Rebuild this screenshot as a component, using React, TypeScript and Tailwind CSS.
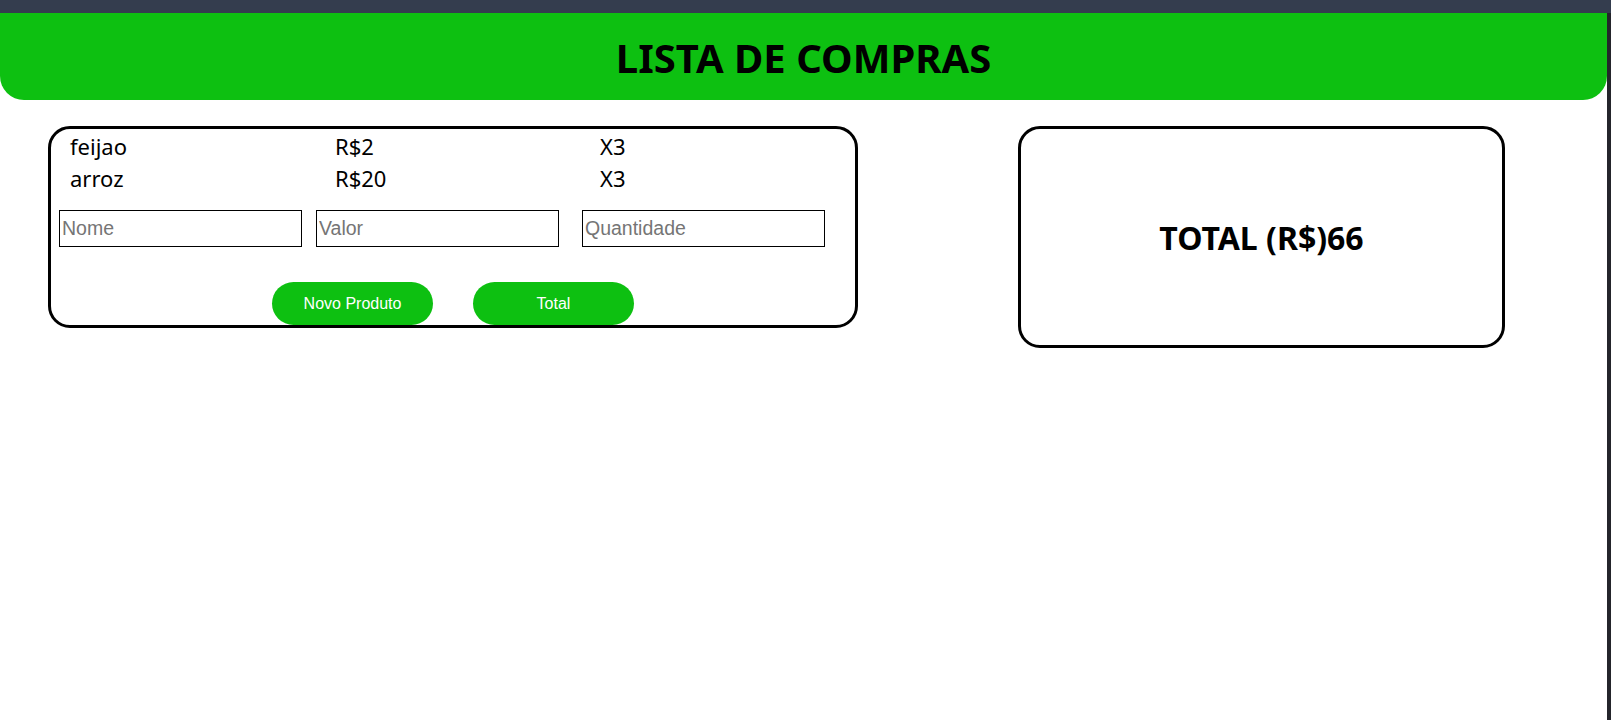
import React from "react"

type Item = { nome: string; valor: number; quantidade: number }

const itens: Item[] = [
  { nome: "feijao", valor: 2, quantidade: 3 },
  { nome: "arroz", valor: 20, quantidade: 3 },
]

const App: React.FC = () => {
  const total = itens.reduce((acc, i) => acc + i.valor * i.quantidade, 0)

  return (
    <div className="min-h-screen flex flex-col bg-white text-black">
      <div className="h-[13px] bg-[#343d4e]" />
      <div className="flex flex-1">
        <div className="flex-1 flex flex-col">
          <header className="h-[87px] bg-[#0dc011] rounded-b-[24px] flex items-center justify-center pt-[2px]">
            <h1 className="font-['Noto_Sans',sans-serif] text-[40px] leading-none font-bold">
              LISTA DE COMPRAS
            </h1>
          </header>

          <main className="flex items-start pt-[26px]">
            <section className="ml-[48px] w-[810px] h-[202px] border-[3px] border-black rounded-[22px] flex flex-col">
              <ul className="pl-[19px] pt-[1px] font-['Noto_Sans',sans-serif] text-[22px] leading-[32px]">
                {itens.map((item) => (
                  <li key={item.nome} className="grid grid-cols-[265px_265px_265px]">
                    <span>{item.nome}</span>
                    <span>R${item.valor}</span>
                    <span>X{item.quantidade}</span>
                  </li>
                ))}
              </ul>

              <div className="flex mt-[16px] ml-[8px] font-['Liberation_Sans',Arial,sans-serif] text-[19.5px]">
                <input
                  placeholder="Nome"
                  className="w-[243px] h-[37px] border border-black px-[2px] outline-none placeholder:text-[#757575]"
                />
                <input
                  placeholder="Valor"
                  className="ml-[14px] w-[243px] h-[37px] border border-black px-[2px] outline-none placeholder:text-[#757575]"
                />
                <input
                  placeholder="Quantidade"
                  className="ml-[23px] w-[243px] h-[37px] border border-black px-[2px] outline-none placeholder:text-[#757575]"
                />
              </div>

              <div className="flex justify-center gap-[40px] mt-[35px] font-['Liberation_Sans',Arial,sans-serif] text-[16px]">
                <button className="w-[161px] h-[43px] rounded-full bg-[#0dc011] text-white">
                  Novo Produto
                </button>
                <button className="w-[161px] h-[43px] rounded-full bg-[#0dc011] text-white">
                  Total
                </button>
              </div>
            </section>

            <section className="ml-[160px] w-[487px] h-[222px] border-[3px] border-black rounded-[22px] flex items-center justify-center pt-[2px]">
              <h2 className="font-['Noto_Sans',sans-serif] text-[32px] leading-none font-bold">
                TOTAL (R$){total}
              </h2>
            </section>
          </main>
        </div>
        <div className="w-[4px] bg-[#24252b]" />
      </div>
    </div>
  )
}

export default App
